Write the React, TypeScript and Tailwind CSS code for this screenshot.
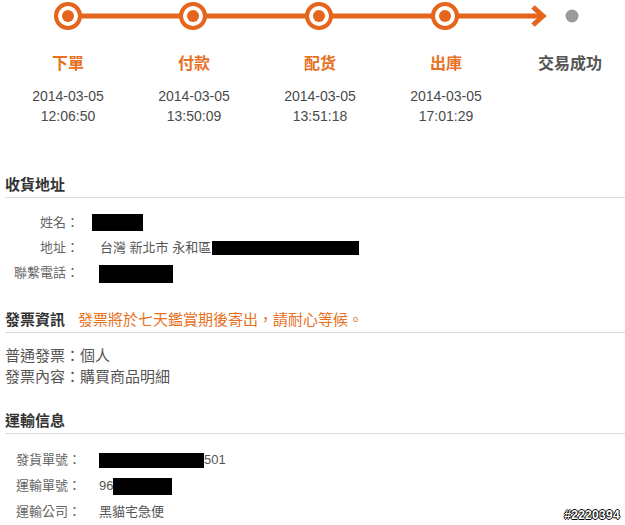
const steps = [
  { name: "下單", date: "2014-03-05", time: "12:06:50" },
  { name: "付款", date: "2014-03-05", time: "13:50:09" },
  { name: "配货", date: "2014-03-05", time: "13:51:18" },
  { name: "出庫", date: "2014-03-05", time: "17:01:29" },
];

const ORANGE = "#e4651b";

function Progress() {
  const xs = [68, 193, 319, 445];
  return (
    <svg width="625" height="32" viewBox="0 0 625 32" className="block">
      <line x1="68" y1="16" x2="543" y2="16" stroke={ORANGE} strokeWidth="5" />
      <polyline
        points="533,7 543,16 533,25"
        fill="none"
        stroke={ORANGE}
        strokeWidth="5"
        strokeLinejoin="miter"
      />
      {xs.map((x) => (
        <g key={x}>
          <circle cx={x} cy="16" r="12" fill="#fff" stroke={ORANGE} strokeWidth="4" />
          <circle cx={x} cy="16" r="6" fill={ORANGE} />
        </g>
      ))}
      <circle cx="572" cy="16" r="6.5" fill="#9a9a9a" />
    </svg>
  );
}

function Redact({ className }: { className: string }) {
  return <span className={"inline-block bg-black " + className} />;
}

function SectionHead({ title, note }: { title: string; note?: string }) {
  return (
    <div className="ml-[5px] flex h-[23px] items-start border-b border-[#dcdcdc] pb-[2px]">
      <span className="text-[15px] leading-[20px] font-bold text-[#333]">{title}</span>
      {note && (
        <span className="ml-[13px] text-[15px] leading-[20px] text-[#e8701f]">{note}</span>
      )}
    </div>
  );
}

export default function App() {
  return (
    <div
      className="relative h-[525px] w-[625px] overflow-hidden bg-white"
      style={{ fontFamily: '"Liberation Sans", "Noto Sans CJK TC", sans-serif' }}
    >
      <Progress />

      <div className="mt-[22px] grid grid-cols-[126px_126px_126px_126px_1fr] pl-[5px]">
        {steps.map((s) => (
          <div key={s.name} className="flex flex-col items-center">
            <span className="text-[16px] leading-[20px] font-bold text-[#e8701f]">{s.name}</span>
            <span className="mt-[12px] text-[14px] leading-[20px] text-[#4a4a4a]">{s.date}</span>
            <span className="text-[14px] leading-[20px] text-[#4a4a4a]">{s.time}</span>
          </div>
        ))}
        <div className="flex flex-col items-center pl-[6px]">
          <span className="text-[16px] leading-[20px] font-bold text-[#555]">交易成功</span>
        </div>
      </div>

      <div className="mt-[49px]">
        <SectionHead title="收貨地址" />
        <div className="mt-[12px] text-[13px] text-[#666]">
          <div className="flex h-[25px] items-center">
            <span className="w-[79px] text-right">姓名：</span>
            <Redact className="ml-[13px] h-[17px] w-[51px]" />
          </div>
          <div className="flex h-[25px] items-center">
            <span className="w-[79px] text-right">地址：</span>
            <span className="ml-[21px] text-[#555]">台灣 新北市 永和區</span>
            <Redact className="ml-[1px] h-[14px] w-[147px]" />
          </div>
          <div className="flex h-[25px] items-center">
            <span className="w-[79px] text-right">聯繫電話：</span>
            <Redact className="ml-[20px] mt-[2px] h-[18px] w-[74px]" />
          </div>
        </div>
      </div>

      <div className="mt-[25px]">
        <SectionHead title="發票資訊" note="發票將於七天鑑賞期後寄出，請耐心等候。" />
        <div className="mt-[12px] ml-[5px] text-[15px] leading-[21px] text-[#555]">
          <p>普通發票：個人</p>
          <p>發票內容：購買商品明細</p>
        </div>
      </div>

      <div className="mt-[24px]">
        <SectionHead title="運輸信息" />
        <div className="mt-[13px] text-[13px] text-[#666]">
          <div className="flex h-[26px] items-center pl-[16px]">
            <span className="w-[83px]">發貨單號：</span>
            <Redact className="h-[15px] w-[105px]" />
            <span className="text-[#555]">501</span>
          </div>
          <div className="flex h-[26px] items-center pl-[16px]">
            <span className="w-[83px]">運輸單號：</span>
            <span className="text-[#555]">96</span>
            <Redact className="mt-[1px] h-[17px] w-[59px]" />
          </div>
          <div className="flex h-[26px] items-center pl-[16px]">
            <span className="w-[83px]">運輸公司：</span>
            <span className="text-[#555]">黑貓宅急便</span>
          </div>
        </div>
      </div>

      <span className="absolute right-[5px] bottom-[3px] text-[12px] leading-[13px] font-bold tracking-[0.3px] text-white [text-shadow:1px_0_#000,-1px_0_#000,0_1px_#000,0_-1px_#000]">
        #2220394
      </span>
    </div>
  );
}
